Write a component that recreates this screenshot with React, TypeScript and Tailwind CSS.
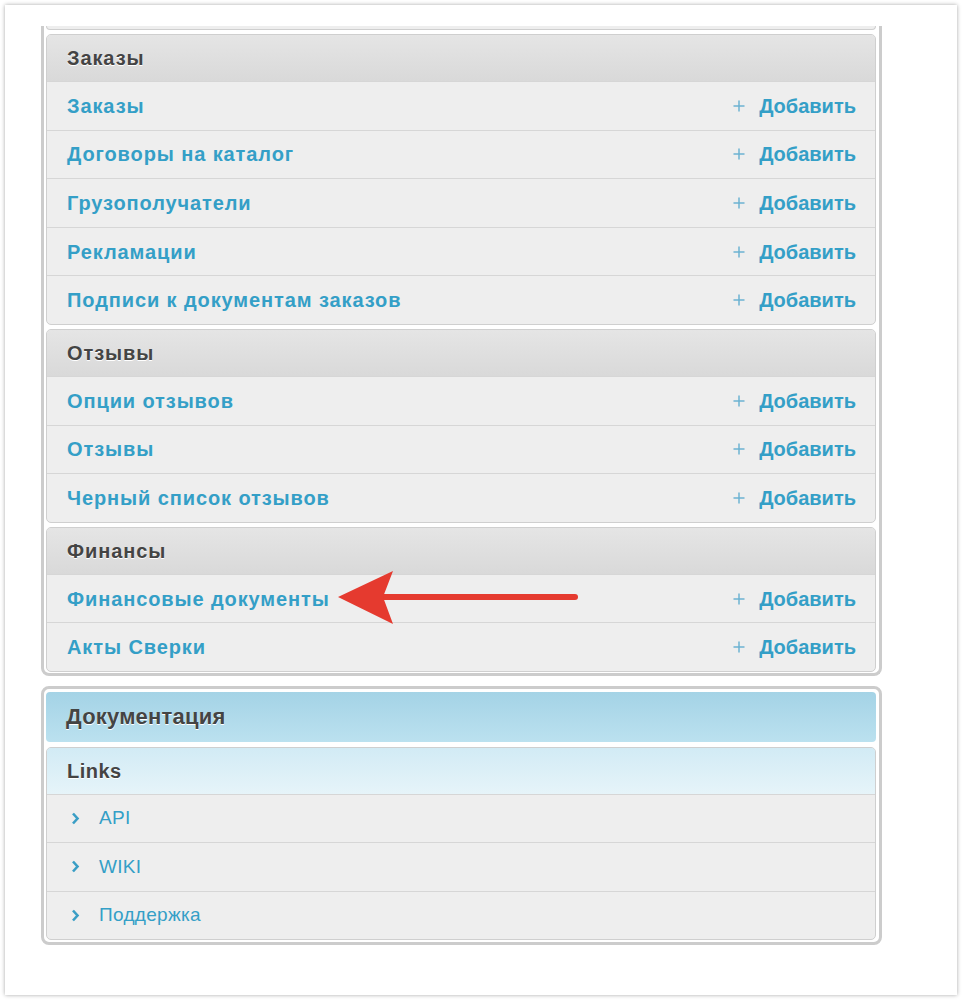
import React from "react";

const font = { fontFamily: '"Liberation Sans", Arial, sans-serif' };

type Group = { title: string; items: string[] };

const groups: Group[] = [
  {
    title: "Заказы",
    items: ["Заказы", "Договоры на каталог", "Грузополучатели", "Рекламации", "Подписи к документам заказов"],
  },
  { title: "Отзывы", items: ["Опции отзывов", "Отзывы", "Черный список отзывов"] },
  { title: "Финансы", items: ["Финансовые документы", "Акты Сверки"] },
];

const links = ["API", "WIKI", "Поддержка"];

const Plus = () => (
  <svg width="12" height="12" viewBox="0 0 12 12" className="mr-[14px]">
    <path d="M6 0.5V11.5M0.5 6H11.5" stroke="#6cb3d2" strokeWidth="1.5" />
  </svg>
);

const Chevron = () => (
  <svg width="9" height="13" viewBox="0 0 9 13" className="mr-[19px] ml-[4px]">
    <path d="M2 1.5L6.5 6.5L2 11.5" fill="none" stroke="#3a9ec5" strokeWidth="2.6" />
  </svg>
);

const Row = ({ label }: { label: string }) => (
  <div className="flex h-[48.6px] items-center justify-between border-t border-[#d6d6d6] pl-[20px] pr-[19px]">
    <span className="text-[20px] font-bold tracking-[0.9px] text-[#349fc7]">{label}</span>
    <span className="flex items-center">
      <Plus />
      <span className="text-[20px] font-bold text-[#349fc7]">Добавить</span>
    </span>
  </div>
);

const Module = ({ group }: { group: Group }) => (
  <div className="overflow-hidden rounded-[5px] border border-[#cfcfcf] bg-[#eeeeee]">
    <div className="flex h-[46px] items-center bg-gradient-to-b from-[#e5e5e5] to-[#d9d9d9] pl-[20px]">
      <span className="text-[20px] font-bold tracking-[0.9px] text-[#444] [text-shadow:0_1px_0_#fff]">
        {group.title}
      </span>
    </div>
    {group.items.map((it) => (
      <Row key={it} label={it} />
    ))}
  </div>
);

export default function App() {
  return (
    <div className="min-h-[1002px] bg-white pt-[5px] pl-[5px]" style={font}>
      <div className="relative h-[990px] w-[952px] bg-white pt-[21px] pl-[36px] shadow-[0_0_4px_rgba(0,0,0,0.35)]">
        <div className="w-[841px] rounded-b-[8px] border-x-[3px] border-b-[3px] border-[#cccccc] pl-[2px] pr-[3px] pb-[1px]">
          <div className="h-[4px] rounded-b-[5px] border-x border-b border-[#cfcfcf] bg-[#eeeeee]" />
          <div className="mt-[4px] flex flex-col gap-[4px]">
            {groups.map((g) => (
              <Module key={g.title} group={g} />
            ))}
          </div>
        </div>

        <div className="mt-[10px] w-[841px] rounded-[8px] border-[3px] border-[#cccccc] pt-[3px] pl-[2px] pr-[3px] pb-[2px]">
          <div className="flex h-[50px] items-center rounded-[4px] bg-gradient-to-b from-[#a4d3e6] to-[#bbe1ef] pl-[20px]">
            <span className="text-[22px] font-bold tracking-[0.2px] text-[#444] [text-shadow:0_1px_0_#fff]">
              Документация
            </span>
          </div>
          <div className="mt-[5px] overflow-hidden rounded-[5px] border border-[#cfcfcf] bg-[#eeeeee]">
            <div className="flex h-[46px] items-center bg-gradient-to-b from-[#d2ebf5] to-[#e6f4f9] pl-[20px]">
              <span className="text-[20px] font-bold tracking-[0.5px] text-[#444] [text-shadow:0_1px_0_#fff]">
                Links
              </span>
            </div>
            {links.map((l) => (
              <div key={l} className="flex h-[48.3px] items-center border-t border-[#d6d6d6] pl-[20px]">
                <Chevron />
                <span className="text-[19px] tracking-[0.3px] text-[#349fc7]">{l}</span>
              </div>
            ))}
          </div>
        </div>

        <svg
          className="absolute left-[333px] top-[561px]"
          width="250"
          height="64"
          viewBox="0 0 250 64"
        >
          <path d="M45 31H237" stroke="#e53a2f" strokeWidth="6" strokeLinecap="round" />
          <path d="M0 31L55 5L45 31L55 58Z" fill="#e53a2f" />
        </svg>
      </div>
    </div>
  );
}
